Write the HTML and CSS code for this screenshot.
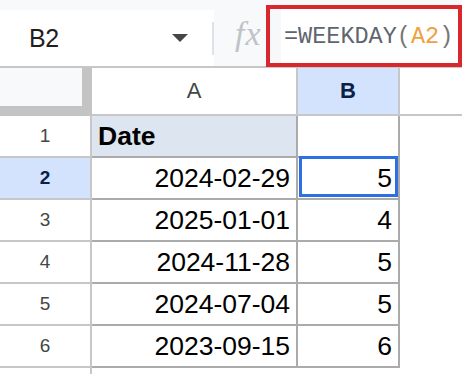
FILE: index.html
```html
<!DOCTYPE html>
<html>
<head>
<meta charset="utf-8">
<link rel="stylesheet" href="styles.css">
</head>
<body>
<div class="formula-bar">
  <div class="name-box">
    <span class="cell-ref">B2</span>
    <span class="caret"></span>
    <span class="divider"></span>
  </div>
  <div class="fx">fx</div>
  <div class="formula-input">
    <span class="gutter"></span>
    <span class="formula">=WEEKDAY<span class="paren">(</span><span class="ref">A2</span><span class="paren">)</span></span>
  </div>
</div>
<div class="sheet">
  <div class="corner"></div>
  <div class="col-head">A</div>
  <div class="col-head active">B</div>
  <div class="col-head blank"></div>

  <div class="row-head">1</div>
  <div class="cell title">Date</div>
  <div class="cell"></div>
  <div class="rest"></div>

  <div class="row-head active">2</div>
  <div class="cell num">2024-02-29</div>
  <div class="cell num selected">5</div>

  <div class="row-head">3</div>
  <div class="cell num">2025-01-01</div>
  <div class="cell num">4</div>

  <div class="row-head">4</div>
  <div class="cell num">2024-11-28</div>
  <div class="cell num">5</div>

  <div class="row-head">5</div>
  <div class="cell num">2024-07-04</div>
  <div class="cell num">5</div>

  <div class="row-head">6</div>
  <div class="cell num">2023-09-15</div>
  <div class="cell num">6</div>

  <div class="row-head tail"></div>
  <div class="tail-cells"></div>
</div>
</body>
</html>
```
FILE: styles.css
```css
html, body {
  margin: 0;
  padding: 0;
}
body {
  width: 462px;
  height: 374px;
  overflow: hidden;
  background: #ffffff;
  font-family: "Liberation Sans", Arial, sans-serif;
}

/* ---------- formula bar ---------- */
.formula-bar {
  display: flex;
  align-items: flex-start;
  height: 66px;
  background: #f8f9fa;
  border-bottom: 2px solid #c7c7c7;
}
.name-box {
  display: flex;
  align-items: center;
  box-sizing: border-box;
  width: 214px;
  height: 56px;
  margin-top: 10px;
  padding-left: 29px;
  background: #ffffff;
}
.cell-ref {
  font-size: 25px;
  color: #1f1f1f;
  letter-spacing: -0.5px;
}
.caret {
  margin-left: auto;
  margin-right: 24px;
  width: 0;
  height: 0;
  border-left: 8px solid transparent;
  border-right: 8px solid transparent;
  border-top: 8px solid #444746;
}
.divider {
  width: 2px;
  height: 33px;
  background: #dde3ea;
}
.fx {
  margin-left: 21px;
  margin-top: 18px;
  width: 31px;
  font-family: "Liberation Serif", serif;
  font-style: italic;
  font-size: 34px;
  letter-spacing: 1px;
  color: #bfc3c7;
  line-height: 32px;
}
.formula-input {
  position: relative;
  z-index: 1;
  display: flex;
  align-items: stretch;
  box-sizing: border-box;
  flex: 1;
  height: 62px;
  margin-top: 5px;
  border: 4px solid #d9282d;
  background: #ffffff;
}
.gutter {
  width: 11px;
  background: #f7f8fa;
}
.formula {
  display: flex;
  align-items: center;
  padding-left: 3px;
  font-family: "Liberation Mono", "DejaVu Sans Mono", monospace;
  font-size: 23.5px;
  color: #5f6570;
}
.formula .paren {
  color: #767676;
}
.formula .ref {
  color: #f0a040;
}

/* ---------- grid ---------- */
.sheet {
  display: grid;
  grid-template-columns: 92px 206px 102px 1fr;
  grid-template-rows: 48px repeat(6, 42px) 1fr;
  height: 306px;
}
.sheet > div {
  box-sizing: border-box;
  display: flex;
  align-items: center;
}
.corner {
  background: #f8f9fa;
  border-right: 10px solid #c4c4c4;
  border-bottom: 10px solid #c4c4c4;
}
.col-head {
  justify-content: center;
  font-size: 22px;
  color: #444746;
  border-right: 2px solid #c7c7c7;
  border-bottom: 2px solid #c7c7c7;
  background: #ffffff;
}
.col-head.active {
  background: #d3e3fd;
  color: #0b1f4a;
  font-weight: bold;
}
.col-head.blank {
  border-right: none;
}
.row-head {
  justify-content: center;
  font-size: 19px;
  color: #444746;
  border-right: 2px solid #c7c7c7;
  border-bottom: 2px solid #c7c7c7;
  background: #ffffff;
}
.row-head.active {
  background: #d3e3fd;
  color: #0b1f4a;
  font-weight: bold;
}
.row-head.tail {
  border-bottom: none;
}
.cell {
  border-right: 2px solid #ababab;
  border-bottom: 2px solid #ababab;
  font-size: 26.5px;
  color: #000000;
  background: #ffffff;
}
.cell.title {
  background: #dce5f0;
  font-weight: bold;
  padding-left: 6px;
}
.cell.num {
  justify-content: flex-end;
  padding-right: 6px;
}
.cell.selected {
  position: relative;
}
.cell.selected::after {
  content: "";
  position: absolute;
  top: -2px;
  left: 1px;
  right: 0;
  bottom: 1px;
  border: 3px solid #2f6fe4;
}
.rest {
  grid-column: 4;
  grid-row: 2 / -1;
  background: #ffffff;
}
.tail-cells {
  grid-column: 2 / 4;
}
```
